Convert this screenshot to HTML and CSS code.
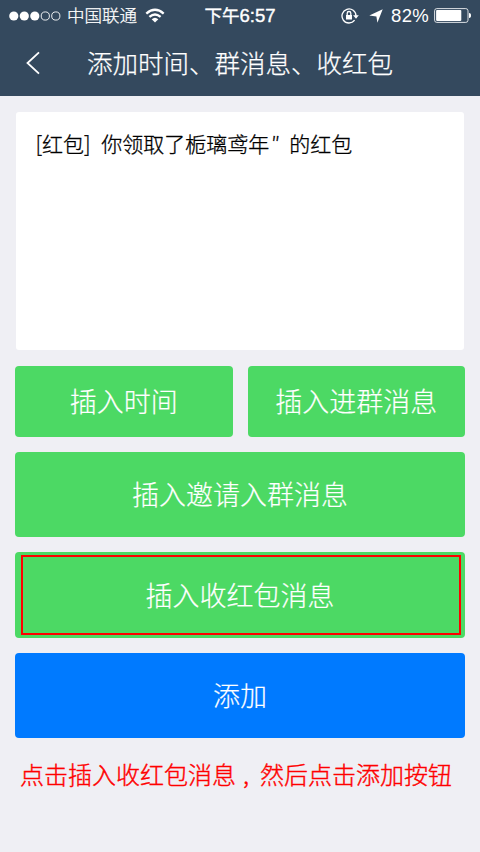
FILE: index.html
```html
<!DOCTYPE html>
<html lang="zh-CN">
<head>
<meta charset="utf-8">
<title>添加时间、群消息、收红包</title>
<link rel="stylesheet" href="styles.css">
</head>
<body>
<header class="header">
  <div class="status">
    <div class="status-left">
      <svg class="signal" width="52" height="12" viewBox="0 0 52 12" fill="#fff"><circle cx="4.8" cy="6" r="4.6"/><circle cx="15.3" cy="6" r="4.6"/><circle cx="25.8" cy="6" r="4.6"/><g fill="none" stroke="#fff" stroke-width=".9"><circle cx="36.3" cy="6" r="4.1"/><circle cx="46.8" cy="6" r="4.1"/></g></svg>
      <span class="carrier">中国联通</span>
      <svg class="wifi" width="20" height="15" viewBox="0 0 20 15" fill="none" stroke="#fff" stroke-width="2.3"><path d="M1.3 5.6Q10-2 18.7 5.6M4.4 8.9Q10 4 15.6 8.9"/><path d="M6.7 11.2Q10 8.2 13.3 11.2L10 14.5Z" fill="#fff" stroke="none"/></svg>
    </div>
    <span class="time">下午<span class="digits">6:57</span></span>
    <div class="status-right">
      <svg class="lock" width="18" height="16" viewBox="0 0 18 16" fill="none" stroke="#fff" stroke-width="1.3"><path d="M13.6 12.2A7 7 0 1 1 15 8"/><path d="M12.1 7.2h5.7L15 10.8Z" fill="#fff" stroke="none"/><path d="M5 7h6v4.5H5z" fill="#fff" stroke="none"/><path d="M6.2 7V5.3a1.8 1.8 0 0 1 3.6 0V7"/></svg>
      <svg class="arrow" width="14" height="14" viewBox="0 0 14 14"><path d="M13.7.3 8.4 13.7 7.4 7.4.3 6.6Z" fill="#fff"/></svg>
      <span class="percent">82%</span>
      <svg class="battery" width="38" height="15" viewBox="0 0 38 15"><rect x=".6" y=".6" width="33.4" height="13.8" rx="2.2" fill="none" stroke="#dde1e5" stroke-width="1"/><rect x="2.1" y="2.1" width="25.2" height="10.8" rx=".8" fill="#fff"/><path d="M35 5c1.6.2 2 1.2 2 2.5S36.6 9.8 35 10Z" fill="#fff"/></svg>
    </div>
  </div>
  <div class="nav">
    <svg class="back" width="14" height="24" viewBox="0 0 14 24" fill="none" stroke="#fff" stroke-width="1.8"><path d="M13 1.3 1.5 12 13 22.7"/></svg>
    <h1 class="title">添加时间、群消息、收红包</h1>
  </div>
</header>
<main class="content">
  <div class="message"><span class="tag">[红包]</span><span class="body">你领取了栀璃鸢年</span><span class="quote">″</span><span>的红包</span></div>
  <div class="row">
    <button class="btn short">插入时间</button>
    <button class="btn short">插入进群消息</button>
  </div>
  <button class="btn">插入邀请入群消息</button>
  <button class="btn marked">插入收红包消息</button>
  <button class="btn primary">添加</button>
  <p class="hint">点击插入收红包消息<span class="comma">,</span>然后点击添加按钮</p>
</main>
</body>
</html>
```

FILE: styles.css
```css
*, *::after { box-sizing: border-box; }
body {
  margin: 0;
  height: 852px;
  background: #efeff4;
  font-family: "Liberation Sans", "Noto Sans CJK SC", sans-serif;
  overflow: hidden;
}
svg { display: block; flex: none; }
.header { height: 96px; background: #34495e; color: #fff; }
.status {
  display: grid;
  grid-template-columns: 204.5px 1fr auto;
  height: 31px;
  padding-right: 8px;
  align-items: center;
  font-size: 17.5px;
  line-height: 30px;
}
.status-left, .status-right { display: flex; align-items: center; }
.status-left { padding-left: 9px; }
.carrier {
  margin: -1px 0 0 6px;
  font-weight: 300;
  font-family: "Noto Sans CJK SC", sans-serif;
  -webkit-text-stroke: .25px currentColor;
}
.wifi { margin-left: 8px; }
.time { font-weight: 400; -webkit-text-stroke: .4px #fff; }
.digits { font-size: 18.5px; }
.arrow { margin-left: 10px; margin-right: -1px; }
.percent { margin-left: 9px; font-size: 18.5px; letter-spacing: .3px; }
.battery { margin-left: 5px; }
.nav { display: flex; height: 65px; align-items: center; padding: 0 0 1px 26px; }
.title {
  margin: -2px 0 0 47px;
  font: 300 25.5px/38px "Noto Sans CJK SC", sans-serif;
  -webkit-text-stroke: .25px currentColor;
}
.content { display: flex; flex-direction: column; gap: 15px; padding: 16px 15px 0; }
.message {
  display: flex;
  height: 238px;
  margin: 0 1px 1px;
  padding: 15px 20px;
  border-radius: 3px;
  background: #fff;
  color: #000;
  font: 300 21px/32px "Noto Sans CJK SC", sans-serif;
  -webkit-text-stroke: .3px currentColor;
}
.tag { margin-left: -.5px; }
.body { margin-left: 10.5px; }
.quote { width: 20px; padding-left: 2px; }
.row { display: grid; grid-template-columns: 1fr 1fr; gap: 15px; }
.btn {
  height: 85.5px;
  margin: 0;
  padding: 0;
  border: 0;
  border-radius: 4px;
  background: #4cd964;
  color: #fff;
  font: 300 27px/40px "Noto Sans CJK SC", sans-serif;
  -webkit-text-stroke: .2px currentColor;
}
.short { height: 70.5px; }
.marked { position: relative; }
.marked::after {
  content: "";
  position: absolute;
  inset: 3px 4px auto 6px;
  height: 80px;
  border: 2px solid #f00;
}
.primary { background: #007aff; }
.hint {
  margin: 3px 0 0 5px;
  color: #f00;
  font: 300 24px/36px "Noto Sans CJK SC", sans-serif;
  -webkit-text-stroke: .4px currentColor;
  white-space: nowrap;
}
.comma { display: inline-block; width: 24px; padding-left: 7px; }
```
